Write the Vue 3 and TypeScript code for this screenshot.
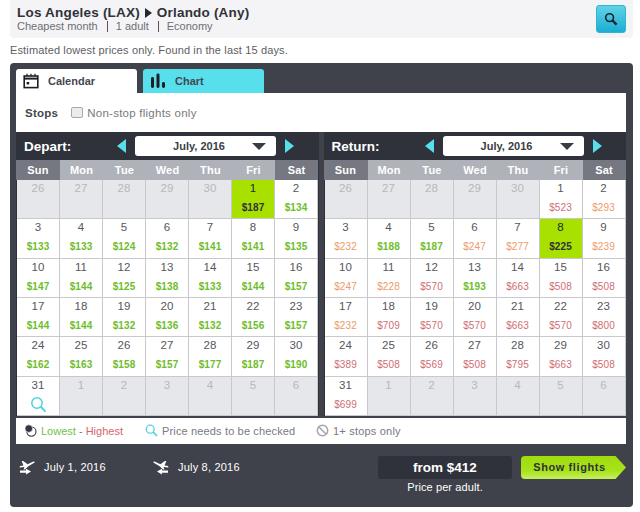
<script setup lang="ts">
interface Day {
  n: number
  price?: string
  tone?: string
  muted?: boolean
  selected?: boolean
  check?: boolean
}

interface Cal {
  label: string
  days: Day[]
}

const weekdays = ['Sun', 'Mon', 'Tue', 'Wed', 'Thu', 'Fri', 'Sat']

function tone(p: number, ret: boolean) {
  if (!ret || p < 200) return 'low'
  return p < 300 ? 'mid' : 'high'
}

function build(prices: number[], selected: number, ret: boolean): Day[] {
  const days: Day[] = [26, 27, 28, 29, 30].map((n) => ({ n, muted: true }))
  prices.forEach((p, i) => {
    const n = i + 1
    days.push({
      n,
      price: p ? '$' + p : undefined,
      tone: tone(p, ret),
      selected: n === selected,
      check: p === 0
    })
  })
  for (let n = 1; n <= 6; n++) days.push({ n, muted: true })
  return days
}

const calendars: Cal[] = [
  {
    label: 'Depart:',
    days: build(
      [
        187, 134, 133, 133, 124, 132, 141, 141, 135, 147, 144, 125, 138, 133, 144, 157, 144, 144,
        132, 136, 132, 156, 157, 162, 163, 158, 157, 177, 187, 190, 0
      ],
      1,
      false
    )
  },
  {
    label: 'Return:',
    days: build(
      [
        523, 293, 232, 188, 187, 247, 277, 225, 239, 247, 228, 570, 193, 663, 508, 508, 232, 709,
        570, 570, 663, 570, 800, 389, 508, 569, 508, 795, 663, 508, 699
      ],
      8,
      true
    )
  }
]
</script>

<template>
  <div class="page">
    <header class="summary">
      <div>
        <div class="route">Los Angeles (LAX) <span class="arrow"></span> Orlando (Any)</div>
        <div class="meta">
          <span>Cheapest month</span><i></i><span>1 adult</span><i></i><span>Economy</span>
        </div>
      </div>
      <button class="search-btn" type="button" aria-label="Search">
        <svg width="14" height="14" viewBox="0 0 14 14" fill="none" stroke="#17222c">
          <circle cx="5.6" cy="5.6" r="3.9" stroke-width="1.6" />
          <path d="M8.6 8.6 L12.6 12.6" stroke-width="2.2" />
        </svg>
      </button>
    </header>

    <p class="note">Estimated lowest prices only. Found in the last 15 days.</p>

    <section class="panel">
      <div class="tabs">
        <div class="tab active">
          <svg width="16" height="16" viewBox="0 0 16 16" fill="none" stroke="#1d1f27">
            <rect x="1.2" y="3" width="13.6" height="11.6" stroke-width="1.6" />
            <path d="M1 5.6 H15" stroke-width="2" />
            <path d="M4 0.8 V3 M8 0.8 V3 M12 0.8 V3" stroke-width="1.2" />
            <rect x="3.6" y="9" width="2.6" height="2.4" fill="#1d1f27" stroke="none" />
          </svg>
          <span>Calendar</span>
        </div>
        <div class="tab chart">
          <svg width="16" height="16" viewBox="0 0 16 16" fill="#1d1f27">
            <rect x="1" y="4" width="3" height="11" rx="1.4" />
            <rect x="6.5" y="0.5" width="3" height="14.5" rx="1.4" />
            <rect x="12" y="9" width="3" height="6" rx="1.4" />
          </svg>
          <span>Chart</span>
        </div>
      </div>

      <div class="stops">
        <strong>Stops</strong>
        <span class="box"></span>
        <span>Non-stop flights only</span>
      </div>

      <div class="calendars">
        <div v-for="cal in calendars" :key="cal.label" class="calendar">
          <div class="cal-head">
            <span class="cal-label">{{ cal.label }}</span>
            <span class="nav prev"></span>
            <div class="month">
              <span>July, 2016</span>
              <span class="caret"></span>
            </div>
            <span class="nav next"></span>
          </div>
          <div class="grid weekdays">
            <div v-for="(w, i) in weekdays" :key="w" :class="{ weekend: i === 0 || i === 6 }">{{ w }}</div>
          </div>
          <div class="grid days">
            <div
              v-for="(d, i) in cal.days"
              :key="i"
              class="day"
              :class="{ muted: d.muted, selected: d.selected }"
            >
              <div class="num">{{ d.n }}</div>
              <div v-if="d.price" class="price" :class="d.tone">{{ d.price }}</div>
              <svg v-else-if="d.check" class="check" width="17" height="17" viewBox="0 0 17 17" fill="none" stroke="#4fd3dc" stroke-width="1.5">
                <circle cx="7" cy="7" r="5.2" />
                <path d="M10.8 10.8 L15.6 15.6" stroke-width="2" />
              </svg>
            </div>
          </div>
        </div>
      </div>

      <div class="legend">
        <div class="legend-item first">
          <svg width="13" height="13" viewBox="0 0 13 13" fill="none" stroke="#33363f" stroke-width="1.1">
            <circle cx="7.4" cy="7.6" r="4.6" />
            <circle cx="4.8" cy="4.6" r="3.8" fill="#33363f" stroke="#fff" stroke-width="0.6" />
          </svg>
          <span><span class="lo">Lowest</span> - <span class="hi">Highest</span></span>
        </div>
        <div class="legend-item second">
          <svg width="13" height="13" viewBox="0 0 13 13" fill="none" stroke="#4fd3dc" stroke-width="1.3">
            <circle cx="5.2" cy="5.2" r="4" />
            <path d="M8.2 8.2 L12 12" stroke-width="1.7" />
          </svg>
          <span>Price needs to be checked</span>
        </div>
        <div class="legend-item third">
          <svg width="13" height="13" viewBox="0 0 13 13" fill="none" stroke="#a4a6ab" stroke-width="1.5">
            <circle cx="6.5" cy="6.5" r="5.2" />
            <path d="M3 3 L10 10" />
          </svg>
          <span>1+ stops only</span>
        </div>
      </div>

      <footer class="foot">
        <div class="dates">
          <div class="date first">
            <svg width="16" height="15" viewBox="0 0 16 15" fill="#fff">
              <path d="M0.5 7.5 L1 6 L4.5 5.6 L2.6 1 L4.2 1 L8.6 4.2 L14.4 1.6 Q16 1.4 15.6 2.6 L9 6.6 L6 9.4 L4.6 9.4 L5.4 7 Z" />
              <path d="M1 10.4 H7 V8.8 L12 11.6 L7 14.4 V12.8 H1 Z" />
            </svg>
            <span>July 1, 2016</span>
          </div>
          <div class="date second">
            <svg width="16" height="15" viewBox="0 0 16 15" fill="#fff">
              <path d="M15.5 7.5 L15 6 L11.5 5.6 L13.4 1 L11.8 1 L7.4 4.2 L1.6 1.6 Q0 1.4 0.4 2.6 L7 6.6 L10 9.4 L11.4 9.4 L10.6 7 Z" />
              <path d="M15 10.4 H9 V8.8 L4 11.6 L9 14.4 V12.8 H15 Z" />
            </svg>
            <span>July 8, 2016</span>
          </div>
        </div>
        <div class="total">
          <div class="amount">from $412</div>
          <div class="per">Price per adult.</div>
        </div>
        <button class="show" type="button">Show flights</button>
      </footer>
    </section>
  </div>
</template>

<style>
body {
  margin: 0;
  background: #fff;
}
</style>

<style scoped>
.page {
  width: 640px;
  height: 512px;
  box-sizing: border-box;
  padding: 0 7px 0 10px;
  font-family: "Liberation Sans", Arial, sans-serif;
  color: #3c3e45;
  overflow: hidden;
}

.summary {
  height: 38px;
  box-sizing: border-box;
  display: flex;
  justify-content: space-between;
  align-items: flex-start;
  padding: 5px 7px 0 7px;
  background: #f4f4f6;
  border-radius: 0 0 4px 4px;
}

.route {
  font-size: 13.5px;
  line-height: 15px;
  font-weight: bold;
  color: #30323a;
  letter-spacing: 0.2px;
}

.arrow {
  display: inline-block;
  width: 0;
  height: 0;
  margin: 0 1px;
  border-left: 7px solid #25272e;
  border-top: 5px solid transparent;
  border-bottom: 5px solid transparent;
  vertical-align: -1px;
}

.meta {
  display: flex;
  align-items: center;
  font-size: 11px;
  line-height: 12px;
  color: #6d6f75;
}

.meta i {
  width: 1px;
  height: 11px;
  margin: 0 8px 0 9px;
  background: #55575d;
}

.search-btn {
  width: 30px;
  height: 28px;
  padding: 0;
  display: flex;
  align-items: center;
  justify-content: center;
  border: 1px solid #2fb6cf;
  border-radius: 3px;
  background: linear-gradient(#5fd3e6, #1cadd4);
}

.note {
  margin: 6px 0 0;
  height: 19px;
  font-size: 11px;
  line-height: 13px;
  color: #5c5e64;
  letter-spacing: 0.14px;
}

.panel {
  height: 444px;
  box-sizing: border-box;
  padding: 6px 7px 0 6px;
  background: #3f424b;
  border-radius: 4px;
}

.tabs {
  display: flex;
  gap: 6px;
  height: 24px;
}

.tab {
  width: 121px;
  box-sizing: border-box;
  display: flex;
  align-items: center;
  gap: 9px;
  padding-left: 7px;
  border-radius: 3px 3px 0 0;
  background: #fff;
  font-size: 11px;
  font-weight: bold;
  color: #45474e;
}

.tab.chart {
  background: #58dfec;
}

.stops {
  height: 39px;
  display: flex;
  align-items: center;
  padding-left: 9px;
  background: #fff;
  font-size: 11.5px;
  color: #77797e;
  letter-spacing: 0.25px;
}

.stops strong {
  color: #45474e;
  margin-right: 13px;
}

.box {
  width: 10px;
  height: 9px;
  margin-right: 4px;
  border: 1px solid #a9a9ad;
  border-radius: 2px;
  background: #ececee;
}

.calendars {
  display: flex;
  gap: 5px;
}

.calendar {
  width: 303px;
  background: #2f323b;
}

.cal-head {
  height: 28px;
  display: flex;
  align-items: center;
  padding-left: 8px;
}

.cal-label {
  width: 93px;
  font-size: 13.5px;
  font-weight: bold;
  color: #fff;
}

.nav {
  width: 0;
  height: 0;
  border-top: 7px solid transparent;
  border-bottom: 7px solid transparent;
}

.nav.prev {
  border-right: 9px solid #58dfec;
}

.nav.next {
  border-left: 9px solid #58dfec;
}

.month {
  width: 141px;
  height: 20px;
  box-sizing: border-box;
  margin: 0 9px;
  position: relative;
  display: flex;
  align-items: center;
  justify-content: center;
  padding-right: 13px;
  background: #fff;
  border-radius: 3px;
  font-size: 11px;
  font-weight: bold;
  color: #3c3e45;
}

.caret {
  position: absolute;
  right: 10px;
  top: 7px;
  width: 0;
  height: 0;
  border-left: 7px solid transparent;
  border-right: 7px solid transparent;
  border-top: 7px solid #3a3c44;
}

.grid {
  display: grid;
  grid-template-columns: repeat(7, 43px);
}

.weekdays {
  height: 20px;
  background: #b0b2ba;
  width: 302px;
  grid-template-columns: 44px repeat(6, 43px);
}

.weekdays div {
  display: flex;
  align-items: center;
  justify-content: center;
  font-size: 11px;
  font-weight: bold;
  color: #fff;
  letter-spacing: 0.2px;
}

.weekdays .weekend {
  background: #767881;
}

.days {
  width: 302px;
  box-sizing: border-box;
  grid-auto-rows: 39.33px;
  background: #c9c9cc;
  border-left: 1px solid #2f323b;
}

.day {
  box-sizing: border-box;
  margin: 0 1px 1px 0;
  background: #fff;
  display: flex;
  flex-direction: column;
  align-items: center;
  font-size: 11.5px;
  color: #55575d;
  overflow: hidden;
}

.num {
  line-height: 14px;
  margin-top: 1px;
}

.price {
  margin-top: 7px;
  font-size: 10px;
  line-height: 12px;
  letter-spacing: 0.1px;
}

.price.low {
  font-weight: bold;
  color: #6ebd2a;
}

.price.mid {
  color: #ee9a66;
}

.price.high {
  color: #cf6d72;
}

.check {
  margin-top: 4px;
}

.day.muted {
  background: #e5e7ea;
}

.day.muted .num {
  color: #b6b8bb;
}

.day.selected {
  background: #a8e000;
}

.day.selected .num {
  color: #25272e;
}

.day.selected .price {
  font-weight: bold;
  color: #30323a;
}

.legend {
  height: 26px;
  margin-top: 2px;
  display: flex;
  align-items: center;
  background: #fff;
  font-size: 11px;
  color: #77797e;
  letter-spacing: 0.15px;
}

.legend-item {
  display: flex;
  align-items: center;
  gap: 4px;
}

.legend-item.first {
  margin-left: 8px;
  width: 121px;
  letter-spacing: 0;
}

.legend-item.second {
  width: 171px;
}

.legend-item.second svg {
  margin-right: 0;
}

.legend-item.third {
  letter-spacing: 0.2px;
}

.lo {
  color: #72bf4d;
}

.hi {
  color: #d8636b;
}

.foot {
  display: flex;
  align-items: flex-start;
  padding-top: 12px;
}

.dates {
  display: flex;
  width: 362px;
  padding-top: 4px;
}

.date {
  display: flex;
  align-items: center;
  gap: 9px;
  color: #fff;
  font-size: 11px;
  letter-spacing: 0.2px;
}

.date.first {
  width: 134px;
  margin-left: 3px;
}

.total {
  width: 134px;
  text-align: center;
  color: #fff;
}

.amount {
  height: 23px;
  line-height: 23px;
  border-radius: 3px;
  background: #2f323b;
  font-size: 13.5px;
  font-weight: bold;
}

.per {
  margin-top: 1px;
  font-size: 11px;
  line-height: 14px;
  letter-spacing: 0.1px;
}

.show {
  width: 105px;
  height: 23px;
  margin-left: 9px;
  padding: 0 8px 0 0;
  border: 0;
  background: linear-gradient(#9fdc0e, #a8e21a 65%, #c6ee62);
  clip-path: polygon(0 0, 90% 0, 100% 50%, 90% 100%, 0 100%);
  border-radius: 4px 0 0 4px;
  font-family: inherit;
  font-size: 11px;
  font-weight: bold;
  color: #2f323b;
  letter-spacing: 0.6px;
}
</style>
